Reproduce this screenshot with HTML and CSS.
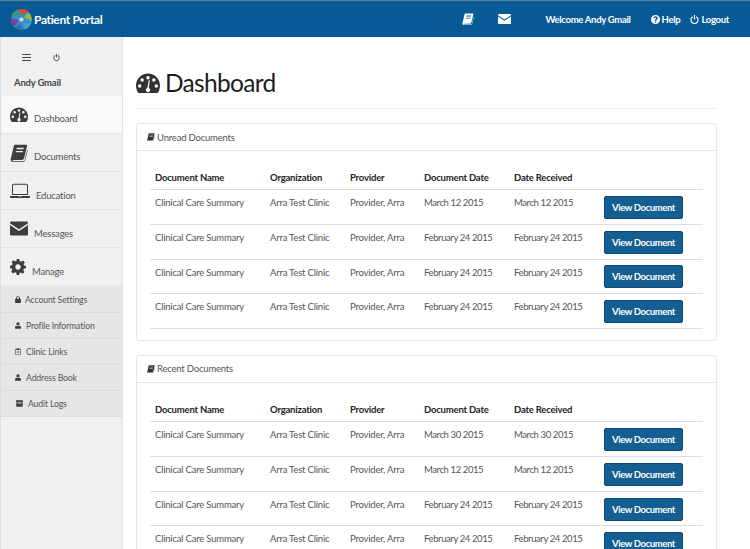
FILE: index.html
```html
<!DOCTYPE html>
<html lang="en">
<head>
    <meta charset="UTF-8">
    <meta name="viewport" content="width=device-width, initial-scale=1.0">
    <title>Patient Portal</title>
    <link rel="stylesheet" href="styles.css">
</head>
<body>

<svg class="icon-defs" width="0" height="0">
    <symbol id="i-gauge" viewBox="0 0 28 24">
        <path fill-rule="evenodd" d="M14 1C6.3 1 0 7.3 0 15c0 2.900 .8 5.600 2.200 8 .3 .5 .7 .7 1.200 .7h21.200c.5 0 .9-.2 1.200-.7 1.400-2.400 2.200-5.100 2.200-8C28 7.300 21.700 1 14 1zM14 3.800a2 2 0 1 1 0 4 2 2 0 0 1 0-4zM7.200 6.600a2 2 0 1 1 0 4 2 2 0 0 1 0-4zM20.800 6.600a2 2 0 1 1 0 4 2 2 0 0 1 0-4zM4.300 13.400a2 2 0 1 1 0 4 2 2 0 0 1 0-4zM23.700 13.400a2 2 0 1 1 0 4 2 2 0 0 1 0-4zM14.800 8.800l1.400 .3-1.300 8.300c1 .5 1.600 1.400 1.600 2.600 0 1.600-1.200 2.800-2.500 2.800s-2.500-1.200-2.500-2.800c0-1.300 .8-2.400 2-2.800z"/>
    </symbol>
    <symbol id="i-book" viewBox="0 0 26 28">
        <path fill-rule="evenodd" d="M7 1h17c1.200 0 1.800 1 1.500 2.200L21 21.800c-.5 2-2 3.200-4 3.200H4.500c-.9 0-1.500 .5-1.500 1.200 0 .5 .5 .8 1.300 .8H20c.7 0 1.300-.4 1.500-1L26 8.500l.8 .7-4.400 17c-.4 1.200-1.400 1.800-2.600 1.800H4C1.800 28 0 26.400 0 24.300c0-.6 .1-1.200 .3-1.700L5 3C5.300 1.800 6 1 7 1zM9.500 6l-.5 2h11l.5-2zM8.200 11l-.5 2h11l.5-2z"/>
    </symbol>
    <symbol id="i-laptop" viewBox="0 0 30 22">
        <path fill-rule="evenodd" d="M5.500 0h19C25.900 0 27 1.100 27 2.500V17H3V2.500C3 1.100 4.100 0 5.500 0zM5.500 1.500c-.6 0-1 .4-1 1v13h21v-13c0-.6-.4-1-1-1zM0 18.500h12.500c.2 .5 .7 .8 1.200 .8h2.600c.5 0 1-.3 1.200-.8H30V20c0 .8-.7 1.500-1.500 1.500h-27C.7 21.500 0 20.800 0 20z"/>
    </symbol>
    <symbol id="i-envelope" viewBox="0 0 28 22">
        <path d="M2 0h24c1.100 0 2 .9 2 2v1L14 12.200 0 3V2C0 .9 .9 0 2 0zM0 5.600l14 9.200 14-9.200V20c0 1.100-.9 2-2 2H2c-1.100 0-2-.9-2-2z"/>
    </symbol>
    <symbol id="i-cog" viewBox="0 0 24 24">
        <path fill-rule="evenodd" d="M10 0h4l.6 3.200c.8 .2 1.500 .5 2.200 .9l2.700-1.800 2.800 2.800-1.900 2.700c.4 .7 .7 1.400 .9 2.200L24 10v4l-3.200 .6c-.2 .8-.5 1.500-.9 2.200l1.900 2.700-2.800 2.800-2.700-1.900c-.7 .4-1.400 .7-2.200 .9L14 24h-4l-.6-3.200c-.8-.2-1.500-.5-2.200-.9l-2.700 1.900-2.800-2.800 1.900-2.700c-.4-.7-.7-1.400-.9-2.200L0 14v-4l3.200-.6c.2-.8 .5-1.500 .9-2.200L2.300 4.500l2.800-2.800 2.700 1.900c.7-.4 1.400-.7 2.200-.9zM12 8a4 4 0 1 0 0 8 4 4 0 0 0 0-8z"/>
    </symbol>
    <symbol id="i-lock" viewBox="0 0 18 22">
        <path fill-rule="evenodd" d="M3 9V6.500C3 3 5.600 .5 9 .5s6 2.500 6 6V9h1.500c.8 0 1.500 .7 1.500 1.500v10c0 .8-.7 1.500-1.500 1.500h-15C.7 22 0 21.300 0 20.500v-10C0 9.700 .7 9 1.500 9zM6 9h6V6.500C12 4.800 10.700 3.500 9 3.500S6 4.800 6 6.500z"/>
    </symbol>
    <symbol id="i-user" viewBox="0 0 20 22">
        <path d="M10 0a5.500 5.500 0 1 1 0 11 5.500 5.500 0 0 1 0-11zM5 11.500c1.300 1 3 1.500 5 1.500s3.700-.5 5-1.500c3 .3 5 2.500 5 6.500v2c0 1.100-.9 2-2 2H2c-1.100 0-2-.9-2-2v-2c0-4 2-6.200 5-6.500z"/>
    </symbol>
    <symbol id="i-clip" viewBox="0 0 18 24">
        <path fill-rule="evenodd" d="M6 2.500C6 1.100 7.300 0 9 0s3 1.100 3 2.500h4.500c.8 0 1.500 .7 1.500 1.500v18.500c0 .8-.7 1.500-1.500 1.500h-15C.7 24 0 23.300 0 22.500V4c0-.8 .7-1.500 1.500-1.500zM2 5v17h14V5h-2v2H4V5zM5 11h8v2H5zM5 15h8v2H5z"/>
    </symbol>
    <symbol id="i-archive" viewBox="0 0 24 22">
        <path fill-rule="evenodd" d="M1 0h22c.6 0 1 .4 1 1v5H0V1c0-.6 .4-1 1-1zM1 7.500h22V21c0 .6-.4 1-1 1H2c-.6 0-1-.4-1-1zM8.500 10.500v2h7v-2z"/>
    </symbol>
    <symbol id="i-help" viewBox="0 0 24 24">
        <path fill-rule="evenodd" d="M12 0a12 12 0 1 1 0 24 12 12 0 0 1 0-24zM10 17v3.500h4V17zM12 3.500c-3 0-5 1.500-5.700 4l3 1.300c.4-1.200 1.200-2 2.500-2 1.200 0 2 .7 2 1.600 0 1-.8 1.500-1.800 2.100-1.300 .8-2 1.700-2 3.500v1h4v-.8c0-.8 .4-1.200 1.300-1.800 1.400-.9 2.700-2 2.700-4 0-3-2.800-4.900-6-4.900z"/>
    </symbol>
    <symbol id="i-power" viewBox="0 0 24 24">
        <path d="M10.500 0h3v12h-3zM6.800 3.400l1.600 2.500C5.800 7.400 4 10 4 13c0 4.400 3.600 8 8 8s8-3.600 8-8c0-3-1.800-5.600-4.400-7.100l1.600-2.500C20.700 5.400 23 9 23 13c0 6.100-4.900 11-11 11S1 19.100 1 13c0-4 2.300-7.600 5.800-9.600z"/>
    </symbol>
    <symbol id="i-bars" viewBox="0 0 20 16">
        <path d="M0 0h20v2.400H0zM0 6.800h20v2.400H0zM0 13.600h20V16H0z"/>
    </symbol>
</svg>

<header class="topbar">
    <div class="brand">
        <svg class="brand-logo" viewBox="0 0 40 40">
            <circle cx="20" cy="20" r="20" fill="#3a8fc0"/>
            <path d="M12 3c5-3 11-4 17-1 2 1 4 3 5 5-5-2-9 0-12 5-2-4-5-7-10-9z" fill="#d9492f"/>
            <path d="M34 7c5 5 6 12 5 17-3-4-8-7-14-6 1-5 4-9 9-11z" fill="#8fbf3f"/>
            <path d="M39 25c-2 6-7 11-13 14 1-5-1-10-5-13 6 2 13 2 18-1z" fill="#4aa0d8"/>
            <path d="M25 39c-7 2-14 0-19-5 5 0 10-3 12-8 0 5 3 10 7 13z" fill="#2a6fb5"/>
            <path d="M5 33C0 28-1 21 1 16c3 3 8 5 13 4-1 5-4 11-9 13z" fill="#7c3f98"/>
            <path d="M1 14C2 9 6 5 11 3c0 4 2 8 6 10-6-1-12-1-16 1z" fill="#3c9e62"/>
            <circle cx="20" cy="20" r="4" fill="#bfe0ee"/>
        </svg>
        <span>Patient Portal</span>
    </div>
    <nav class="topnav">
        <svg class="top-icon top-book"><use href="#i-book"/></svg>
        <svg class="top-icon top-mail"><use href="#i-envelope"/></svg>
        <span class="welcome">Welcome Andy Gmail</span>
        <a class="toplink help"><svg><use href="#i-help"/></svg>Help</a>
        <a class="toplink"><svg><use href="#i-power"/></svg>Logout</a>
    </nav>
</header>

<div class="layout">
    <aside class="sidebar">
        <div class="profile">
            <div class="profile-tools">
                <svg class="tool-bars"><use href="#i-bars"/></svg>
                <svg class="tool-power"><use href="#i-power"/></svg>
            </div>
            <div class="profile-name">Andy Gmail</div>
        </div>
        <ul class="menu">
            <li class="active"><svg class="w18"><use href="#i-gauge"/></svg>Dashboard</li>
            <li><svg class="w17"><use href="#i-book"/></svg>Documents</li>
            <li class="low"><svg class="w20"><use href="#i-laptop"/></svg>Education</li>
            <li class="low"><svg class="w18"><use href="#i-envelope"/></svg>Messages</li>
            <li class="low"><svg class="w16"><use href="#i-cog"/></svg>Manage</li>
        </ul>
        <ul class="submenu">
            <li><svg class="narrow"><use href="#i-lock"/></svg>Account Settings</li>
            <li><svg><use href="#i-user"/></svg>Profile Information</li>
            <li><svg><use href="#i-clip"/></svg>Clinic Links</li>
            <li><svg><use href="#i-user"/></svg>Address Book</li>
            <li><svg class="wide"><use href="#i-archive"/></svg>Audit Logs</li>
        </ul>
    </aside>

    <main class="content">
        <h1 class="page-title"><svg><use href="#i-gauge"/></svg>Dashboard</h1>

        <section class="panel">
            <div class="panel-head"><svg><use href="#i-book"/></svg>Unread Documents</div>
            <div class="panel-body">
                <table>
                    <thead>
                        <tr><th class="c1">Document Name</th><th class="c2">Organization</th><th class="c3">Provider</th><th class="c4">Document Date</th><th class="c5">Date Received</th><th></th></tr>
                    </thead>
                    <tbody>
                        <tr><td>Clinical Care Summary</td><td>Arra Test Clinic</td><td>Provider, Arra</td><td>March 12 2015</td><td>March 12 2015</td><td><button>View Document</button></td></tr>
                        <tr><td>Clinical Care Summary</td><td>Arra Test Clinic</td><td>Provider, Arra</td><td>February 24 2015</td><td>February 24 2015</td><td><button>View Document</button></td></tr>
                        <tr><td>Clinical Care Summary</td><td>Arra Test Clinic</td><td>Provider, Arra</td><td>February 24 2015</td><td>February 24 2015</td><td><button>View Document</button></td></tr>
                        <tr><td>Clinical Care Summary</td><td>Arra Test Clinic</td><td>Provider, Arra</td><td>February 24 2015</td><td>February 24 2015</td><td><button>View Document</button></td></tr>
                    </tbody>
                </table>
            </div>
        </section>

        <section class="panel">
            <div class="panel-head"><svg><use href="#i-book"/></svg>Recent Documents</div>
            <div class="panel-body">
                <table>
                    <thead>
                        <tr><th class="c1">Document Name</th><th class="c2">Organization</th><th class="c3">Provider</th><th class="c4">Document Date</th><th class="c5">Date Received</th><th></th></tr>
                    </thead>
                    <tbody>
                        <tr><td>Clinical Care Summary</td><td>Arra Test Clinic</td><td>Provider, Arra</td><td>March 30 2015</td><td>March 30 2015</td><td><button>View Document</button></td></tr>
                        <tr><td>Clinical Care Summary</td><td>Arra Test Clinic</td><td>Provider, Arra</td><td>March 12 2015</td><td>March 12 2015</td><td><button>View Document</button></td></tr>
                        <tr><td>Clinical Care Summary</td><td>Arra Test Clinic</td><td>Provider, Arra</td><td>February 24 2015</td><td>February 24 2015</td><td><button>View Document</button></td></tr>
                        <tr><td>Clinical Care Summary</td><td>Arra Test Clinic</td><td>Provider, Arra</td><td>February 24 2015</td><td>February 24 2015</td><td><button>View Document</button></td></tr>
                    </tbody>
                </table>
            </div>
        </section>
    </main>
</div>

</body>
</html>
```

FILE: styles.css
```css
html, body {
    height: 100%;
    overflow: hidden;
}
body {
    font-family: Lato, "Noto Sans", Arial, sans-serif;
    font-size: 9.500px;
    letter-spacing: -0.2px;
    color: #555;
    background-color: #fff;
    margin: 0;
    display: flex;
    flex-direction: column;
}
svg {
    fill: currentColor;
}
.icon-defs {
    position: absolute;
}

/* top bar */
.topbar {
    height: 36px;
    flex: none;
    display: flex;
    justify-content: space-between;
    align-items: center;
    background-color: #075a96;
    border-top: 1px solid #5d7f99;
    color: #fff;
}
.brand {
    display: flex;
    align-items: center;
    margin-left: 11px;
    font-size: 12px;
    font-weight: 700;
    letter-spacing: -0.35px;
}
.brand-logo {
    width: 21px;
    height: 21px;
    margin-right: 2px;
}
.topnav {
    display: flex;
    align-items: center;
    font-weight: 700;
    letter-spacing: -0.3px;
    margin-right: 21px;
}
.top-icon {
    height: 12px;
}
.top-book {
    width: 12px;
    margin-right: 24px;
}
.top-mail {
    width: 13px;
    margin-right: 34px;
}
.welcome {
    margin-right: 20px;
}
.toplink {
    display: flex;
    align-items: center;
}
.toplink svg {
    width: 9px;
    height: 9px;
    margin-right: 2px;
}
.help {
    margin-right: 10px;
}

/* sidebar */
.layout {
    flex: 1;
    display: flex;
    min-height: 0;
}
.sidebar {
    width: 121px;
    flex: none;
    background-color: #f0f0f0;
    border-left: 1px solid #ddd;
    border-right: 1px solid #e4e4e4;
}
.profile {
    height: 59px;
    box-sizing: border-box;
    padding: 14px 0 0 13px;
}
.profile-tools {
    display: flex;
    align-items: center;
    height: 13px;
    color: #444;
}
.tool-bars {
    width: 9px;
    height: 7px;
    margin: 0 0 0 8px;
}
.tool-power {
    width: 7px;
    height: 7px;
    margin-left: 22px;
}
.profile-name {
    margin-top: 13px;
    font-weight: 700;
    color: #444;
}
.menu, .submenu {
    list-style-type: none;
    margin: 0;
    padding: 0;
}
.menu li {
    height: 38px;
    box-sizing: border-box;
    display: flex;
    align-items: center;
    padding: 7px 0 0 9px;
    border-bottom: 1px solid #e2e2e2;
}
.menu li.low {
    padding-top: 9px;
}
.menu li:last-child {
    height: 39px;
}
.menu li.active {
    background-color: #f9f9f9;
}
.menu svg {
    margin: -7px 6px 0 0;
    color: #3d3d3d;
}
.menu li.low svg {
    margin-top: -9px;
}
.w18 {
    width: 18px;
    height: 17px;
}
.w17 {
    width: 18px;
    height: 18px;
}
.w20 {
    width: 20px;
    height: 16px;
}
.w16 {
    width: 16px;
    height: 16px;
}
.submenu li {
    height: 26px;
    box-sizing: border-box;
    display: flex;
    align-items: center;
    padding-left: 14px;
    font-size: 8.700px;
    letter-spacing: -0.15px;
    background-color: #e6e6e6;
    border-bottom: 1px solid #dcdcdc;
}
.submenu svg {
    width: 6px;
    height: 7px;
    margin-right: 5px;
    color: #3d3d3d;
}
.submenu svg.narrow {
    margin-right: 4px;
}
.submenu svg.wide {
    width: 7px;
    margin-left: 1px;
}

/* main column */
.content {
    flex: 1;
    min-width: 0;
    padding: 0 33px 0 13px;
}
.page-title {
    display: flex;
    align-items: flex-end;
    height: 72px;
    box-sizing: border-box;
    padding-bottom: 11px;
    margin: 0 0 14px;
    border-bottom: 1px solid #eee;
    font-size: 24.500px;
    font-weight: 400;
    letter-spacing: -0.7px;
    color: #1c1c1c;
}
.page-title svg {
    width: 24px;
    height: 22px;
    margin: 0 5px 3px 0;
    color: #333;
}
.panel {
    border: 1px solid #e6e6e6;
    border-radius: 3px;
    margin-bottom: 14px;
}
.panel-head {
    height: 26px;
    display: flex;
    align-items: center;
    padding-left: 10px;
    border-bottom: 1px solid #e6e6e6;
}
.panel-head svg {
    width: 8px;
    height: 8px;
    margin-right: 2px;
    color: #333;
}
.panel-body {
    padding: 13px 13px 11px 13px;
}
.panel + .panel .panel-body {
    padding-top: 14px;
}
table {
    width: 553px;
    border-collapse: collapse;
    table-layout: fixed;
}
th {
    height: 25px;
    box-sizing: border-box;
    padding: 2px 0 0 5px;
    text-align: left;
    font-weight: 700;
    color: #222;
    border-bottom: 1px solid #ddd;
}
.c1 {
    width: 115px;
}
.c2 {
    width: 80px;
}
.c3 {
    width: 74px;
}
.c4 {
    width: 90px;
}
.c5 {
    width: 90px;
}
td {
    height: 35px;
    box-sizing: border-box;
    padding: 7px 0 0 5px;
    vertical-align: top;
    border-bottom: 1px solid #ddd;
}
tr:nth-child(3) td {
    height: 34px;
}
td:nth-child(4), td:nth-child(5) {
    letter-spacing: -0.4px;
}
td:last-child {
    padding: 1px 0 0 5px;
    vertical-align: middle;
}
button {
    display: block;
    width: 79px;
    height: 23px;
    padding: 0;
    border: 1px solid #0d4a78;
    border-radius: 2px;
    background-color: #145e92;
    color: #fff;
    font-family: inherit;
    font-size: 9.500px;
    font-weight: 700;
    letter-spacing: -0.4px;
    cursor: pointer;
}
```
